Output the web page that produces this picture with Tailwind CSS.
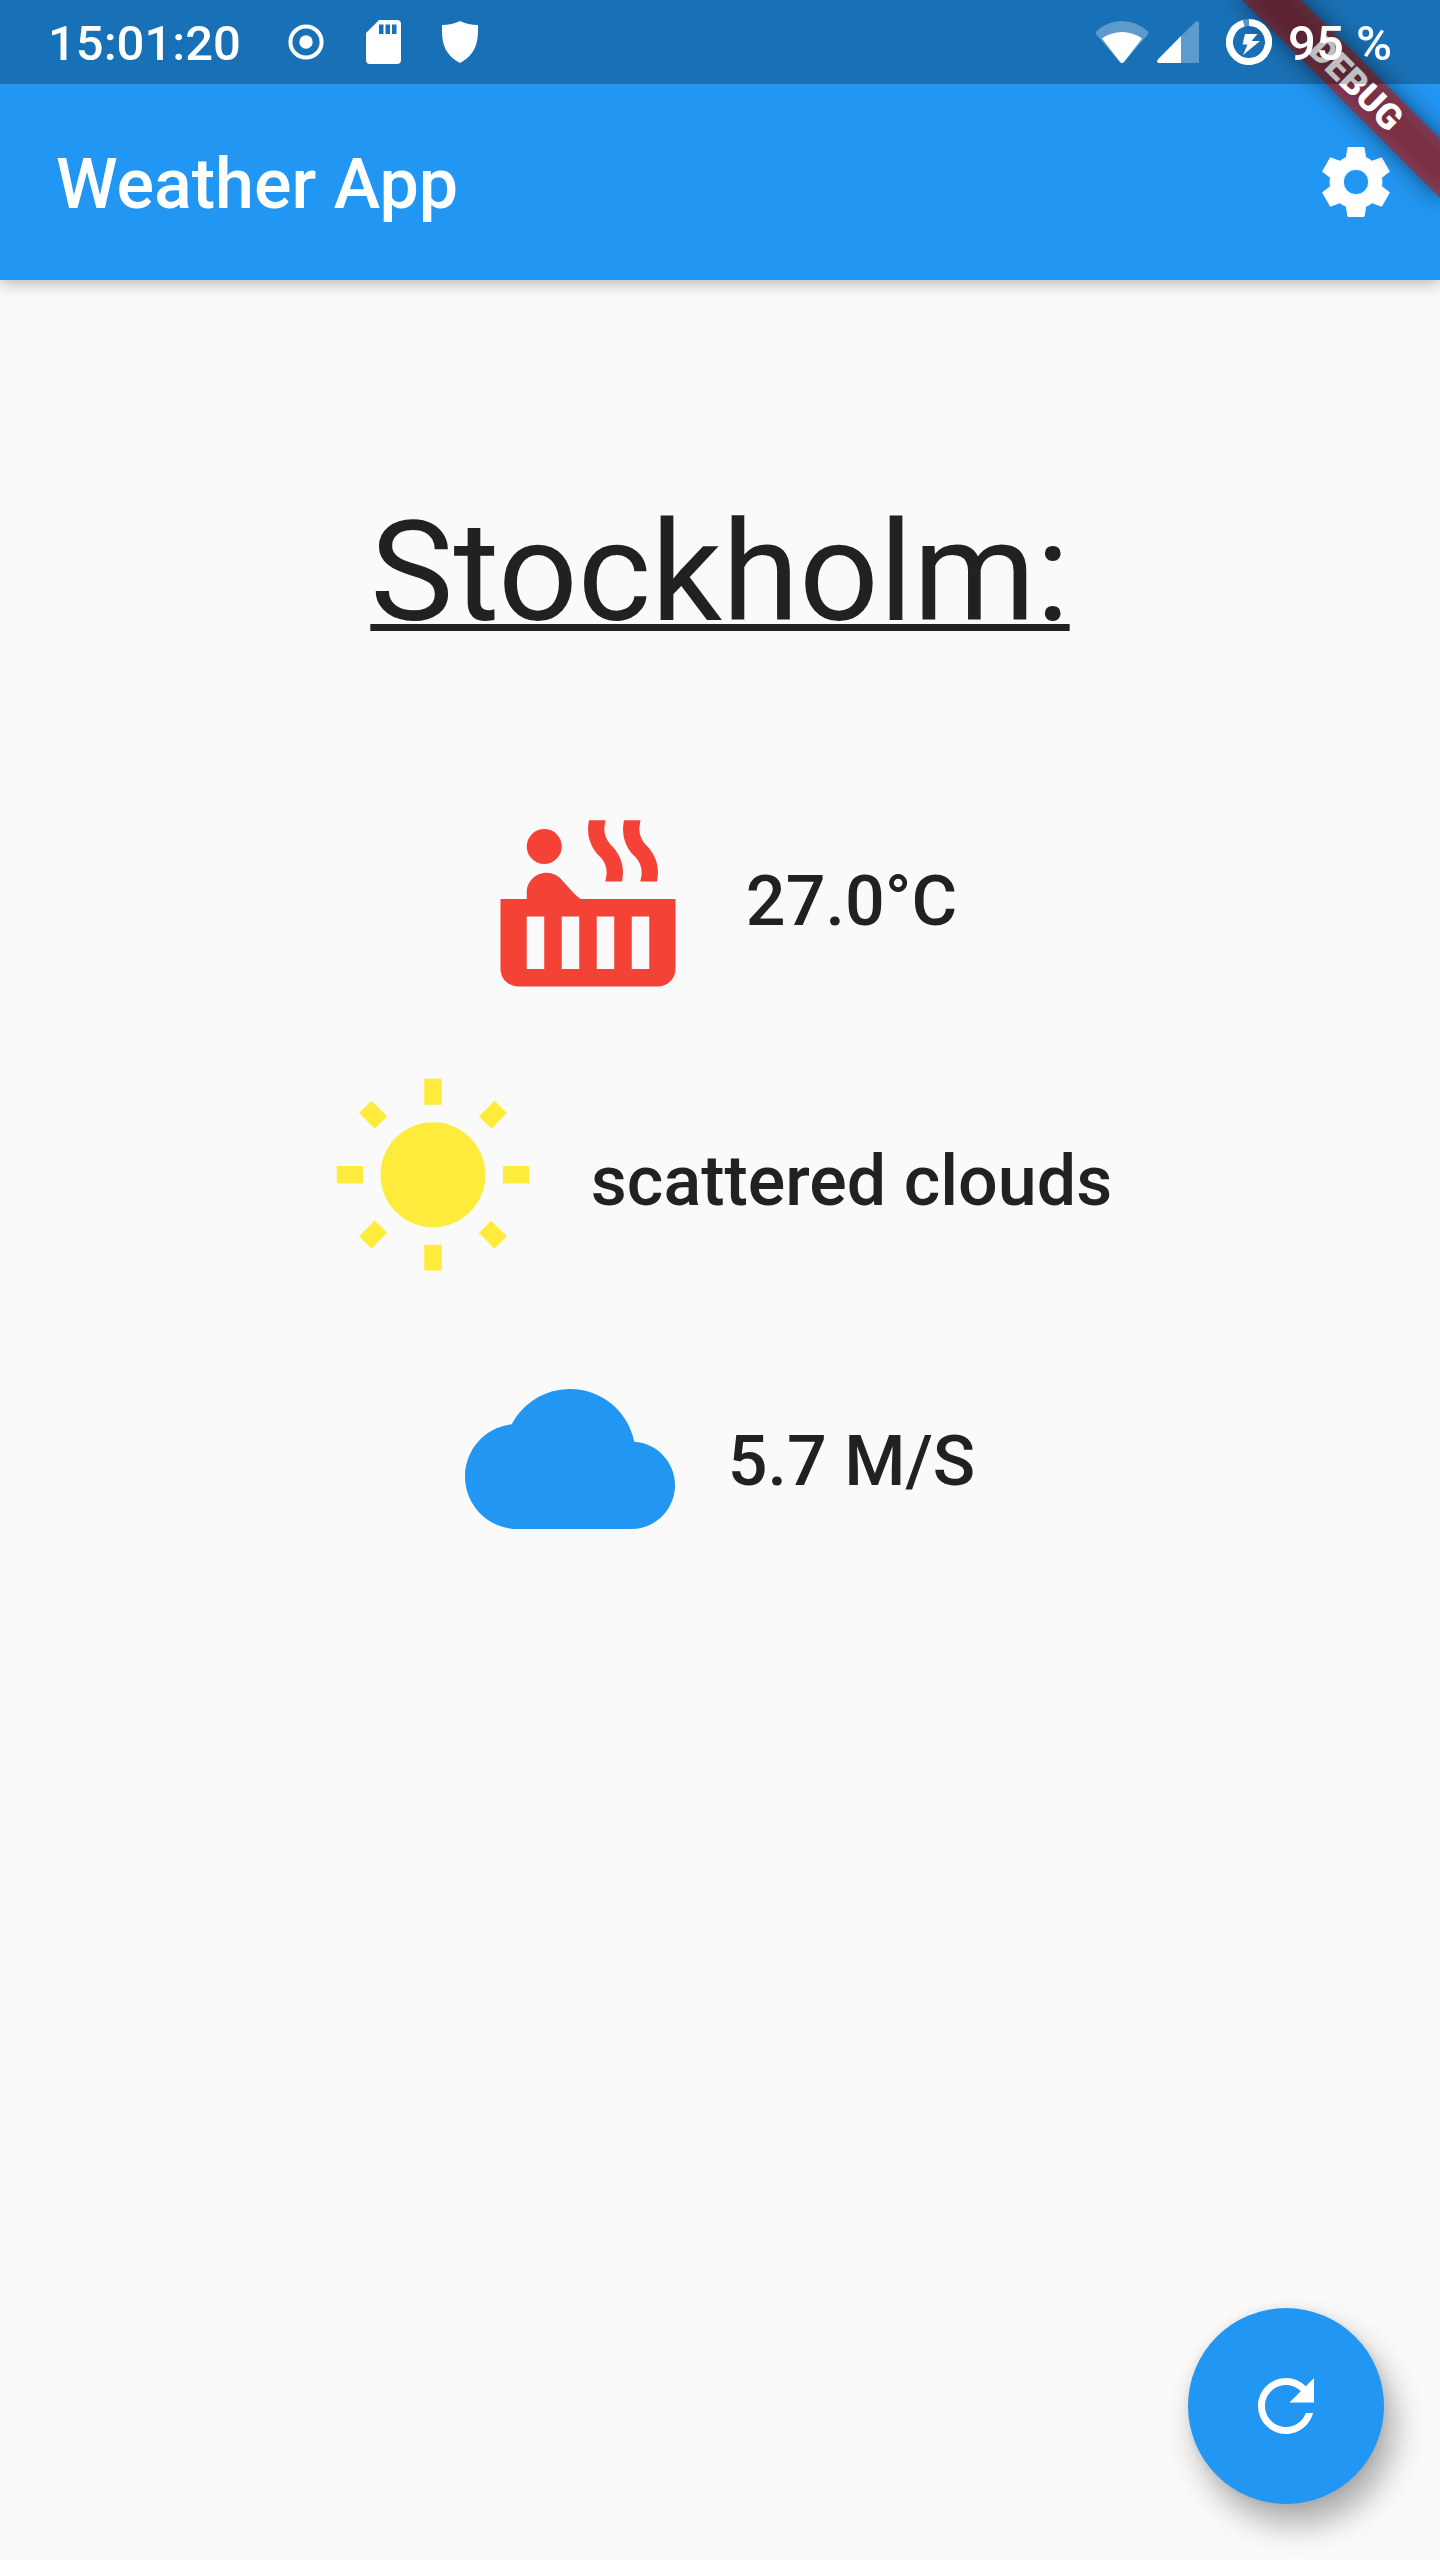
<!DOCTYPE html>
<html lang="en">
<head>
<meta charset="utf-8">
<meta name="viewport" content="width=device-width, initial-scale=1">
<title>Weather App</title>
<script src="https://cdn.jsdelivr.net/npm/@tailwindcss/browser@4"></script>
</head>
<body class="bg-[#fafafa] font-['Roboto',sans-serif] text-[#212121]">
<div class="relative flex min-h-screen flex-col overflow-hidden">

  <header class="bg-[#2196f3] text-white shadow-[0_4px_14px_rgba(0,0,0,0.26)]">
    <!-- Status bar -->
    <div class="relative z-20 flex h-[84px] items-center justify-between bg-black/25 px-12">
      <div class="flex items-center">
        <time class="pt-[3px] text-[49px] leading-[58px] font-medium">15:01:20</time>
        <svg class="ml-[47px] h-9 w-9" viewBox="0 0 36 36" aria-hidden="true"><circle cx="18" cy="18" r="15.6" fill="none" stroke="#fff" stroke-width="4"/><circle cx="18" cy="18" r="6.7" fill="#fff"/></svg>
        <svg class="ml-[41px] h-11 w-9" viewBox="0 0 36 44" aria-hidden="true"><path fill="#fff" fill-rule="evenodd" d="M14 0H32a4 4 0 0 1 4 4V40a4 4 0 0 1-4 4H5a4 4 0 0 1-4-4V13ZM14 4.500V14h4.500V4.500ZM20.500 4.500V14h4.500V4.500ZM27 4.500V14h4.500V4.500Z"/></svg>
        <svg class="ml-[41px] h-[42px] w-9" viewBox="0 0 36 42" aria-hidden="true"><path fill="#fff" d="M18 0Q26 4 36 4C36 16 37 32 18 42C-1 32 0 16 0 4Q10 4 18 0Z"/></svg>
      </div>
      <div class="flex items-center">
        <svg class="h-[44px] w-[54px]" viewBox="0 0 54 44" aria-hidden="true"><path fill="#fff" fill-opacity=".3" d="M1.200 11.500Q12 1 27 1T52.800 11.500Q54 13 52.800 14.500L29 42Q27 44 25 42L1.200 14.500Q0 13 1.200 11.500Z"/><path fill="#fff" d="M7 18.500Q16 12 27 12T47 18.500L29 42Q27 44 25 42Z"/></svg>
        <svg class="ml-2 h-[42px] w-[42px]" viewBox="0 0 42 42" aria-hidden="true"><path fill="#fff" fill-opacity=".3" d="M38.500.8Q42-1 42 2V42H24V15Z"/><path fill="#fff" d="M24 15V42H2Q-1 42 .8 38.500Z"/></svg>
        <svg class="ml-[27px] h-[46px] w-[46px]" viewBox="0 0 46 46" aria-hidden="true"><circle cx="23" cy="23" r="19.500" fill="none" stroke="#fff" stroke-opacity=".3" stroke-width="7"/><path d="M23 3.500A19.500 19.500 0 1 1 17.600 4.260" fill="none" stroke="#fff" stroke-width="7"/><path fill="#fff" d="M19 15H31.500L25.500 22H34L17 36L21.500 25.500H16.500Z"/></svg>
        <span class="ml-4 pt-[3px] text-[49px] leading-[58px] font-medium">95 %</span>
      </div>
    </div>
    <!-- App bar -->
    <div class="flex h-[196px] items-center justify-between pr-[42px] pl-14">
      <div class="pt-[3px] text-[70px] leading-[82px] font-medium">Weather App</div>
      <button type="button" aria-label="Settings" class="flex">
        <svg class="h-[84px] w-[84px]" viewBox="0 0 84 84" aria-hidden="true"><path fill="#fff" stroke="#fff" stroke-width="1" stroke-linejoin="round" fill-rule="evenodd" d="M34 7.500H50L51.700 17.500Q55 18.800 58 21.300L67.600 17.800L75.400 31.500L67.600 37.500Q68.200 42 67.600 46.500L75.400 52.500L67.600 66.200L58 62.700Q55 65.200 51.700 66.500L50 76.500H34L32.300 66.500Q29 65.200 26 62.700L16.400 66.200L8.600 52.500L16.400 46.500Q15.800 42 16.400 37.500L8.600 31.500L16.400 17.800L26 21.300Q29 18.800 32.300 17.500ZM42 29.300A12.700 12.700 0 1 0 42 54.700A12.700 12.700 0 1 0 42 29.300Z"/></svg>
      </button>
    </div>
  </header>

  <!-- Corner ribbon, turned about the window's top right corner -->
  <div class="pointer-events-none absolute top-[98px] right-[-140px] z-10 h-[42px] w-[280px] origin-[140px_-98px] rotate-45">
    <div class="absolute inset-0 bg-black/50 blur-[12px]"></div>
    <div class="relative flex h-full items-center justify-center bg-[#b71c1c]/63 text-[36px] leading-[42px] font-black text-white">DEBUG</div>
  </div>

  <main class="flex flex-1 flex-col items-center pt-[210px]">
    <h1 class="text-[140px] leading-[164px] underline decoration-[7px]">Stockholm:</h1>
    <ul class="mt-[140px] flex flex-col items-center gap-[70px] text-[70px] leading-[82px] font-medium">
      <li class="flex items-center gap-[53px]">
        <svg class="h-[210px] w-[210px] fill-[#f44336]" viewBox="0 0 24 24" aria-hidden="true"><circle cx="7" cy="6" r="2"/><path d="M11.150 12c-.31-.22-.59-.46-.82-.72l-1.400-1.550c-.19-.21-.43-.38-.69-.5-.29-.14-.62-.23-.96-.23h-.03C6.010 9 5 10.010 5 11.250V12H2v8c0 1.100.9 2 2 2h16c1.100 0 2-.9 2-2v-8H11.150zM7 20H5v-6h2v6zm4 0H9v-6h2v6zm4 0h-2v-6h2v6zm4 0h-2v-6h2v6zm-.35-14.140l-.07-.07c-.57-.62-.82-1.410-.67-2.200L18 3h-1.890l-.06.430c-.2 1.360.27 2.710 1.300 3.720l.07.060c.57.620.82 1.410.67 2.200l-.11.590h1.910l.06-.43c.21-1.360-.27-2.710-1.300-3.710zm-4 0l-.07-.07c-.57-.62-.82-1.410-.67-2.200L14 3h-1.890l-.06.430c-.2 1.360.27 2.710 1.300 3.720l.07.060c.57.620.82 1.410.67 2.200l-.11.590h1.910l.06-.43c.21-1.360-.27-2.710-1.300-3.710z"/></svg>
        <span class="pt-[3px]">27.0°C</span>
      </li>
      <li class="flex items-center gap-[53px]">
        <svg class="h-[210px] w-[210px] fill-[#ffeb3b]" viewBox="0 0 24 24" aria-hidden="true"><path d="M6.760 4.840l-1.800-1.790-1.410 1.410 1.790 1.790 1.420-1.410zM4 10.500H1v2h3v-2zm9-9.950h-2V3.500h2V.55zm7.450 3.910l-1.410-1.410-1.790 1.790 1.410 1.410 1.790-1.790zm-3.210 13.700l1.790 1.800 1.410-1.410-1.800-1.790-1.400 1.400zM20 10.500v2h3v-2h-3zm-8-5c-3.310 0-6 2.690-6 6s2.690 6 6 6 6-2.690 6-6-2.690-6-6-6zm-1 16.950h2V19.500h-2v2.950zm-7.450-3.910l1.410 1.410 1.790-1.800-1.410-1.410-1.790 1.800z"/></svg>
        <span class="pt-[3px]">scattered clouds</span>
      </li>
      <li class="flex items-center gap-[53px]">
        <svg class="h-[210px] w-[210px] fill-[#2196f3]" viewBox="0 0 24 24" aria-hidden="true"><path d="M19.350 10.040C18.670 6.590 15.640 4 12 4 9.110 4 6.600 5.640 5.350 8.040 2.340 8.360 0 10.910 0 14c0 3.310 2.690 6 6 6h13c2.760 0 5-2.240 5-5 0-2.640-2.050-4.780-4.650-4.960z"/></svg>
        <span class="pt-[3px]">5.7 M/S</span>
      </li>
    </ul>
  </main>

  <button type="button" aria-label="Refresh" class="fixed right-14 bottom-14 flex h-[196px] w-[196px] items-center justify-center rounded-full bg-[#2196f3] shadow-[10px_20px_32px_rgba(0,0,0,0.32),0_0_12px_rgba(0,0,0,0.08)]">
    <svg class="h-[84px] w-[84px] fill-white" viewBox="0 0 24 24" aria-hidden="true"><path d="M17.650 6.350C16.200 4.900 14.210 4 12 4c-4.420 0-7.990 3.580-7.990 8s3.570 8 7.990 8c3.730 0 6.840-2.550 7.730-6h-2.080c-.82 2.330-3.040 4-5.650 4-3.310 0-6-2.690-6-6s2.690-6 6-6c1.660 0 3.140.690 4.220 1.780L13 11h7V4l-2.350 2.350z"/></svg>
  </button>
</div>
</body>
</html>
